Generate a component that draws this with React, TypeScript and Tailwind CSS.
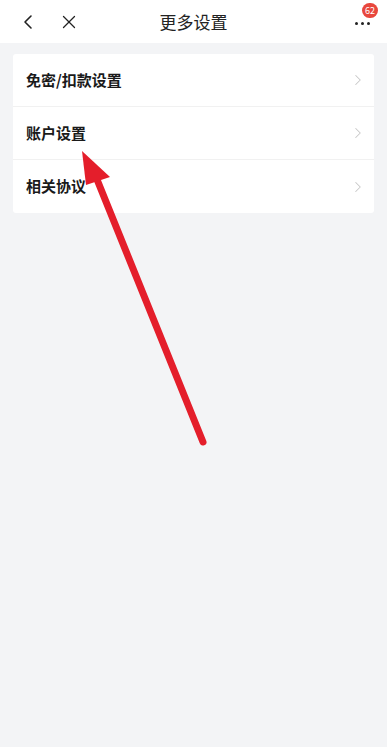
import { ChevronLeft, ChevronRight, X } from "lucide-react";

const rows = ["免密/扣款设置", "账户设置", "相关协议"];

const App = () => {
  return (
    <div
      className="relative w-[387px] h-[747px] bg-[#f3f4f6] overflow-hidden"
      style={{ fontFamily: '"Noto Sans CJK SC", "Noto Sans", sans-serif' }}
    >
      <div className="h-[43px] bg-white flex items-center pl-4 pr-[13px] relative">
        <ChevronLeft className="w-6 h-6 text-[#222]" strokeWidth={1.6} />
        <X className="w-[22px] h-[22px] text-[#222] ml-[18px]" strokeWidth={1.4} />
        <div className="absolute left-0 right-0 text-center text-[17px] text-[#222] pointer-events-none">
          更多设置
        </div>
        <div className="ml-auto relative w-6 h-6 flex items-center justify-center">
          <div className="flex gap-[3px] mt-[3px]">
            <span className="w-[3px] h-[3px] rounded-full bg-[#222]" />
            <span className="w-[3px] h-[3px] rounded-full bg-[#222]" />
            <span className="w-[3px] h-[3px] rounded-full bg-[#222]" />
          </div>
          <div className="absolute -top-[7px] left-[12px] w-[16px] h-[15px] rounded-full bg-[#e8473d] text-white text-[9px] leading-[15px] text-center">
            62
          </div>
        </div>
      </div>

      <div className="mx-[13px] mt-[11px] bg-white rounded-[3px]">
        {rows.map((item, i) => (
          <div
            key={i}
            className={
              "h-[53px] flex items-center pl-[13px] pr-[7px] " +
              (i < rows.length - 1 ? "border-b border-[#f1f1f1]" : "")
            }
          >
            <div className="text-[15px] font-bold text-[#1a1a1a]">{item}</div>
            <ChevronRight className="ml-auto w-[18px] h-[18px] text-[#c8c8c8]" strokeWidth={1.4} />
          </div>
        ))}
      </div>

      <svg
        className="absolute left-0 top-0 pointer-events-none"
        width="387"
        height="747"
        viewBox="0 0 387 747"
      >
        <line
          x1="203"
          y1="442"
          x2="94"
          y2="172"
          stroke="#e41e2b"
          strokeWidth="7"
          strokeLinecap="round"
        />
        <polygon points="82,151 110,177 86,185" fill="#e41e2b" />
      </svg>
    </div>
  );
};

export default App;
